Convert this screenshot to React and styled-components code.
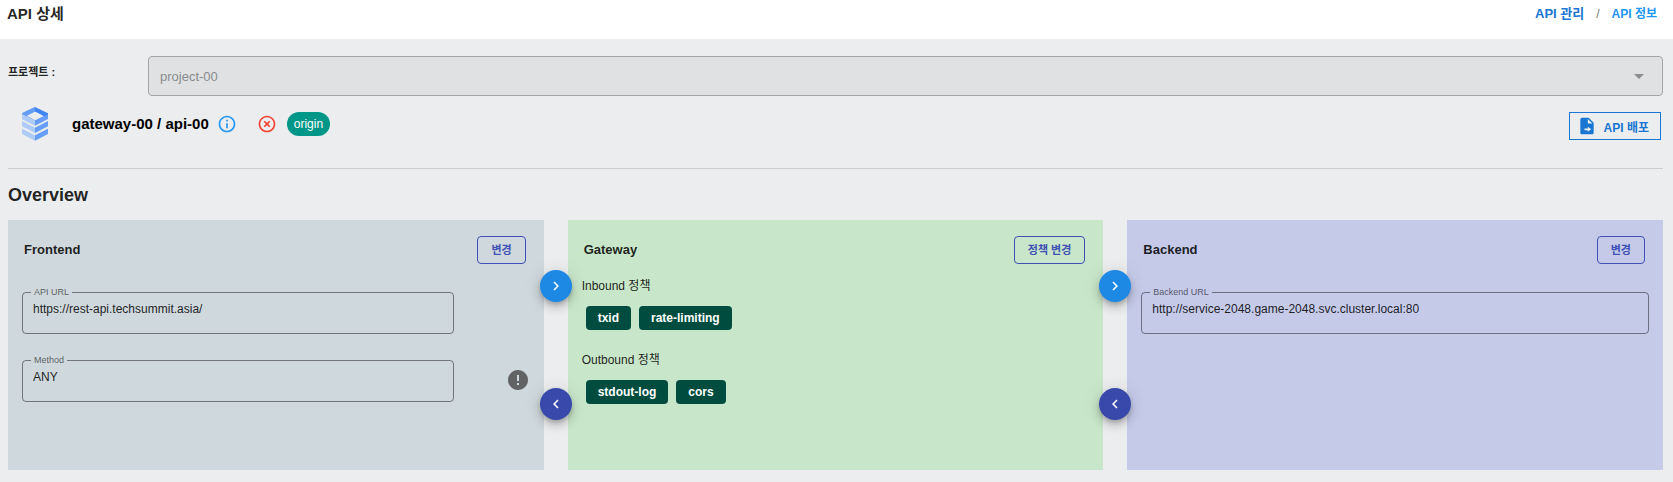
import React, { useId } from "react";
import styled, { createGlobalStyle } from "styled-components";
import {
  MdInfoOutline,
  MdHighlightOff,
  MdChevronLeft,
  MdChevronRight,
  MdError,
  MdArrowDropDown,
} from "react-icons/md";

const GlobalStyle = createGlobalStyle`
  *, *::before, *::after { box-sizing: border-box; }
  html { min-height: 100%; background: #ebedee; }
  body {
    margin: 0;
    font-family: "Liberation Sans", "Noto Sans CJK KR", sans-serif;
    font-size: 12px;
    line-height: 16px;
    color: rgba(0, 0, 0, 0.87);
  }
  button, input, select { font-family: inherit; }
`;

const Header = styled.header`
  display: flex;
  justify-content: space-between;
  align-items: flex-start;
  height: 39px;
  padding: 4px 16px 0 7px;
  background: #fff;
`;

const PageTitle = styled.h1`
  margin: 0;
  font-size: 15px;
  line-height: 20px;
  font-weight: 700;
`;

const Breadcrumb = styled.nav`
  display: flex;
  align-items: center;
  gap: 12px;
  line-height: 20px;
  color: #757575;
`;

const Crumb = styled.a`
  font-size: ${(p) => (p.$current ? 12 : 13)}px;
  font-weight: 600;
  color: ${(p) => (p.$current ? "#2196f3" : "#1976d2")};
  text-decoration: none;
`;

const Main = styled.main`
  padding: 17px 10px 12px 8px;
`;

const ProjectRow = styled.div`
  display: flex;
  align-items: flex-start;
`;

const ProjectLabel = styled.label`
  flex: 0 0 140px;
  padding-top: 8px;
  font-size: 11px;
  font-weight: 700;
`;

const SelectWrap = styled.div`
  flex: 1;
  display: grid;
  align-items: center;
  color: #8a8c8d;
  > * { grid-area: 1 / 1; }
  > svg { justify-self: end; margin-right: 12px; pointer-events: none; }
`;

const ProjectSelect = styled.select`
  width: 100%;
  height: 40px;
  padding: 0 11px;
  appearance: none;
  border: 1px solid #a3a5a7;
  border-radius: 4px;
  background: #dfe1e2;
  color: #8a8c8d;
  font-size: 13px;
  opacity: 1;
`;

const ApiBar = styled.div`
  display: flex;
  align-items: center;
  height: 56px;
  margin-bottom: 16px;
  padding: 0 2px 0 11px;
`;

const ApiName = styled.h2`
  margin: 0 8px 0 19px;
  font-size: 15px;
  line-height: 20px;
  font-weight: 700;
  color: #000;
`;

const StatusIcons = styled.div`
  display: flex;
  gap: 20px;
`;

const OriginChip = styled.span`
  margin-left: 10px;
  padding: 0 7px;
  border-radius: 12px;
  background: #009688;
  color: #fff;
  font-size: 12px;
  line-height: 24px;
`;

const DeployButton = styled.button`
  display: flex;
  align-items: center;
  gap: 7px;
  height: 28px;
  margin: 4px 0 0 auto;
  padding: 0 11px 0 7px;
  border: 1px solid #1976d2;
  background: transparent;
  color: #1976d2;
  font-size: 12px;
  font-weight: 700;
`;

const Divider = styled.hr`
  height: 1px;
  margin: 0;
  border: 0;
  background: #cbcdce;
`;

const SectionTitle = styled.h2`
  margin: 14px 0 13px;
  font-size: 18px;
  line-height: 24px;
  font-weight: 700;
`;

const Panels = styled.div`
  display: grid;
  grid-template-columns: repeat(3, 1fr);
  gap: 24px;
`;

const Panel = styled.section`
  position: relative;
  min-height: 250px;
  padding: 16px 14px;
  background: ${(p) => p.$tone};
`;

const PanelHead = styled.div`
  display: flex;
  align-items: center;
  justify-content: space-between;
  margin: 0 4px 12px 2px;
`;

const PanelTitle = styled.h3`
  margin: 0;
  font-size: 13px;
  line-height: 20px;
  font-weight: 700;
`;

const EditButton = styled.button`
  height: 28px;
  padding: 0 13px 2px;
  border: 1px solid #3f51b5;
  border-radius: 4px;
  background: transparent;
  color: #3f51b5;
  font-size: 11px;
  font-weight: 600;
`;

const Fields = styled.div`
  display: grid;
  gap: 19px;
  padding-top: 9px;
`;

const FieldRow = styled.div`
  display: grid;
  grid-template-columns: ${(p) => (p.$wide ? "1fr" : "85% 1fr")};
  align-items: center;
`;

const Outline = styled.fieldset`
  min-width: 0;
  height: 49px;
  margin: 0;
  padding: 0 10px;
  border: 1px solid rgba(0, 0, 0, 0.45);
  border-radius: 4px;
`;

const Legend = styled.legend`
  margin-left: -2px;
  padding: 0 3px;
  font-size: 9px;
  line-height: 14px;
  color: rgba(0, 0, 0, 0.6);
`;

const TextInput = styled.input`
  display: block;
  width: 100%;
  height: 20px;
  padding: 0;
  border: 0;
  outline: 0;
  background: transparent;
  color: rgba(0, 0, 0, 0.87);
  font-size: 12px;
`;

const Alert = styled.span`
  display: flex;
  justify-self: end;
  padding-top: 4px;
  color: #616365;
`;

const PolicyGroup = styled.div`
  margin-bottom: 20px;
`;

const PolicyLabel = styled.h4`
  margin: 0 0 10px;
  font-size: 12px;
  line-height: 20px;
  font-weight: 400;
`;

const ChipRow = styled.div`
  display: flex;
  gap: 8px;
  padding-left: 4px;
`;

const Chip = styled.span`
  padding: 0 12px;
  border-radius: 4px;
  background: #004d40;
  color: #fff;
  font-size: 12px;
  line-height: 24px;
  font-weight: 700;
`;

/* Round arrows straddling the gap between two panels */
const FlowArrow = styled.button`
  position: absolute;
  z-index: 1;
  top: ${(p) => (p.$back ? 168 : 50)}px;
  right: -28px;
  display: flex;
  align-items: center;
  justify-content: center;
  width: 32px;
  height: 32px;
  padding: 0;
  border: 0;
  border-radius: 50%;
  background: ${(p) => (p.$back ? "#3949ab" : "#1e88e5")};
  color: #fff;
  box-shadow: 0 3px 5px -1px rgba(0, 0, 0, 0.2),
    0 6px 10px 0 rgba(0, 0, 0, 0.14), 0 1px 18px 0 rgba(0, 0, 0, 0.12);
`;

function ApiLogo() {
  return (
    <svg width="34" height="40" viewBox="0 0 102 120" aria-hidden="true">
      <path d="M48 9V24L26 36 48 48V64L9 44V28Z" fill="#669df6" />
      <path d="M48 9 87 28V42L48 23Z" fill="#4285f4" />
      <path d="M9 30 48 49V65L9 45Z" fill="#aecbfa" />
      <path d="M9 28 48 9V23L22 36Z" fill="#669df6" />
      <path d="M87 30 48 49V65L87 45Z" fill="#669df6" />
      <path d="M87 28V31L75 37 65 32V24Z" fill="#4285f4" />
      <path d="M48 23 72 35.500 48 48 24 35.500Z" fill="#ebedee" />
      <path d="M9 51 48 71V87L9 67Z" fill="#aecbfa" />
      <path d="M87 51 48 71V87L87 67Z" fill="#669df6" />
      <path d="M9 74 48 94V110L9 90Z" fill="#aecbfa" />
      <path d="M87 74 48 94V110L87 90Z" fill="#669df6" />
    </svg>
  );
}

function DeployIcon() {
  return (
    <svg width="20" height="20" viewBox="0 0 24 24" fill="currentColor" aria-hidden="true">
      <path d="M14 2H6c-1.100 0-2 .9-2 2v16c0 1.100.9 2 2 2h12c1.100 0 2-.9 2-2V8l-6-6zM13 19v-2H9v-2h4v-2l4 3-4 3zM13 9V3.500L18.500 9H13z" />
    </svg>
  );
}

function Field({ label, value, wide, children }) {
  const id = useId();
  return (
    <FieldRow $wide={wide}>
      <Outline>
        <Legend>
          <label htmlFor={id}>{label}</label>
        </Legend>
        <TextInput id={id} value={value} readOnly />
      </Outline>
      {children}
    </FieldRow>
  );
}

function Policies({ label, items }) {
  return (
    <PolicyGroup>
      <PolicyLabel>{label}</PolicyLabel>
      <ChipRow>
        {items.map((item) => (
          <Chip key={item}>{item}</Chip>
        ))}
      </ChipRow>
    </PolicyGroup>
  );
}

function StagePanel({ title, action, tone, linked, children }) {
  return (
    <Panel $tone={tone}>
      <PanelHead>
        <PanelTitle>{title}</PanelTitle>
        <EditButton type="button">{action}</EditButton>
      </PanelHead>
      {children}
      {linked && (
        <>
          <FlowArrow type="button" aria-label="Inbound">
            <MdChevronRight size={18} />
          </FlowArrow>
          <FlowArrow type="button" aria-label="Outbound" $back>
            <MdChevronLeft size={18} />
          </FlowArrow>
        </>
      )}
    </Panel>
  );
}

export default function App() {
  return (
    <>
      <GlobalStyle />
      <Header>
        <PageTitle>API 상세</PageTitle>
        <Breadcrumb>
          <Crumb href="#apis">API 관리</Crumb>
          <span>/</span>
          <Crumb href="#info" $current>
            API 정보
          </Crumb>
        </Breadcrumb>
      </Header>
      <Main>
        <ProjectRow>
          <ProjectLabel htmlFor="project">프로젝트 :</ProjectLabel>
          <SelectWrap>
            <ProjectSelect id="project" disabled defaultValue="project-00">
              <option>project-00</option>
            </ProjectSelect>
            <MdArrowDropDown size={24} />
          </SelectWrap>
        </ProjectRow>
        <ApiBar>
          <ApiLogo />
          <ApiName>gateway-00 / api-00</ApiName>
          <StatusIcons>
            <MdInfoOutline size={20} color="#2196f3" />
            <MdHighlightOff size={20} color="#f44336" />
          </StatusIcons>
          <OriginChip>origin</OriginChip>
          <DeployButton type="button">
            <DeployIcon />
            API 배포
          </DeployButton>
        </ApiBar>
        <Divider />
        <SectionTitle>Overview</SectionTitle>
        <Panels>
          <StagePanel title="Frontend" action="변경" tone="#cfd8dc" linked>
            <Fields>
              <Field label="API URL" value="https://rest-api.techsummit.asia/" />
              <Field label="Method" value="ANY">
                <Alert>
                  <MdError size={24} />
                </Alert>
              </Field>
            </Fields>
          </StagePanel>
          <StagePanel title="Gateway" action="정책 변경" tone="#c8e6c9" linked>
            <Policies label="Inbound 정책" items={["txid", "rate-limiting"]} />
            <Policies label="Outbound 정책" items={["stdout-log", "cors"]} />
          </StagePanel>
          <StagePanel title="Backend" action="변경" tone="#c5cae9">
            <Fields>
              <Field
                wide
                label="Backend URL"
                value="http://service-2048.game-2048.svc.cluster.local:80"
              />
            </Fields>
          </StagePanel>
        </Panels>
      </Main>
    </>
  );
}
